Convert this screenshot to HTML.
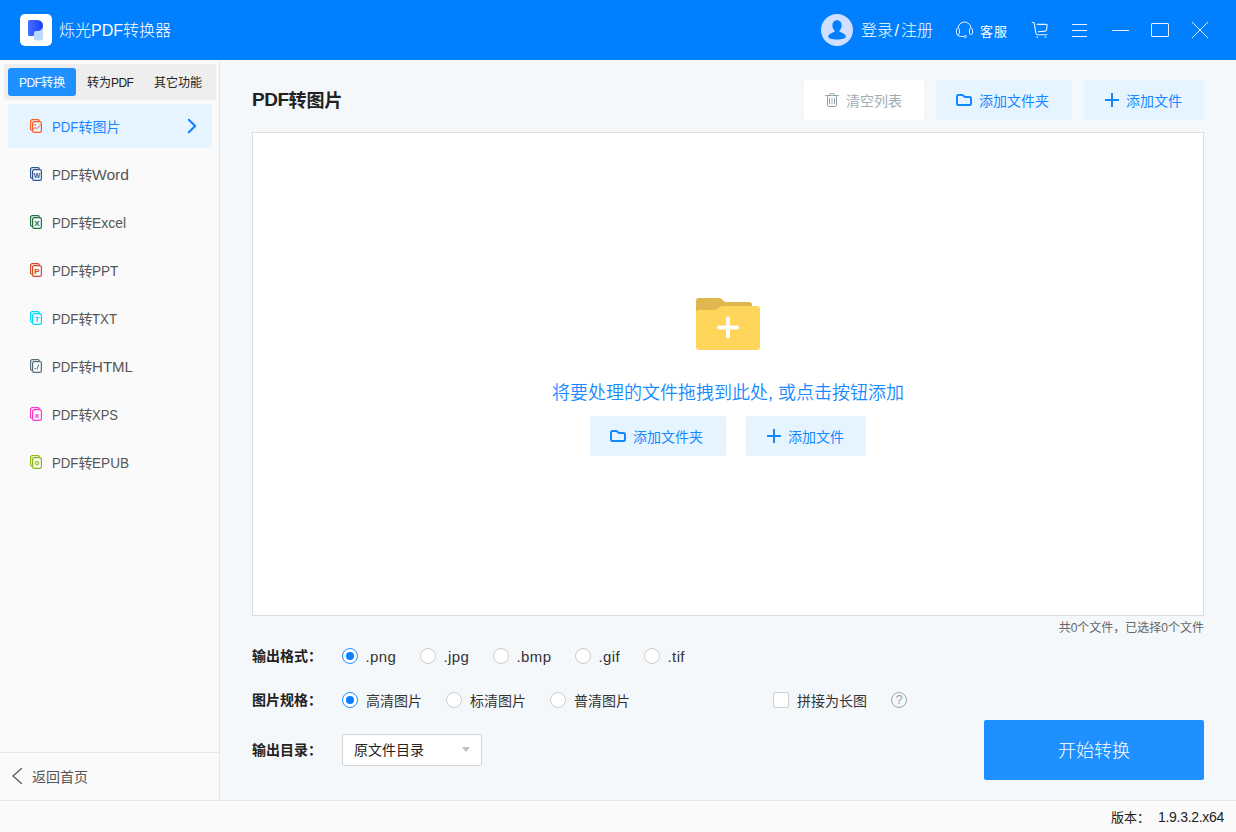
<!DOCTYPE html>
<html lang="zh-CN">
<head>
<meta charset="utf-8">
<title>烁光PDF转换器</title>
<style>
*{box-sizing:border-box;margin:0;padding:0}
html,body{width:1236px;height:832px;overflow:hidden}
body{position:relative;background:#f4f8fa;font-family:"Liberation Sans","Noto Sans CJK SC",sans-serif;color:#333;font-size:14px}
.abs{position:absolute}
.t{position:absolute;white-space:nowrap;line-height:1}
/* title bar */
#bar{left:0;top:0;width:1236px;height:60px;background:#0080ff}
#logo{left:20px;top:14px;width:32px;height:32px;background:#fff;border-radius:5px}
/* sidebar */
#side{left:0;top:60px;width:220px;height:740px;background:#fafafa;border-right:1px solid #e6e6e6}
#tabs{left:4px;top:64px;width:212px;height:36px;background:#eeeeee;border-radius:3px}
#tabA{left:8px;top:68px;width:68px;height:28px;background:#1e90ff;border-radius:3px}
#sel{left:8px;top:104px;width:204px;height:44px;background:#e6f4ff;border-radius:4px}
.mi{font-size:14px;color:#555;left:52px}
#sideline{left:0;top:752px;width:219px;height:1px;background:#e6e6e6}
/* footer */
#foot{left:0;top:800px;width:1236px;height:32px;background:#fafafa;border-top:1px solid #e6e6e6}
/* main */
#drop{left:252px;top:132px;width:952px;height:484px;background:#fff;border:1px solid #dcdcdc}
.btn{position:absolute;border-radius:3px;background:#e6f4ff}
.btxt{font-size:14px;color:#1488ff}
.lab{font-size:14px;font-weight:bold;color:#222;left:252px}
.radio{position:absolute;width:16px;height:16px;border-radius:50%;border:1px solid #ccc;background:#fff}
.radio.on{border-color:#1e90ff}
.radio.on::after{content:"";position:absolute;left:3px;top:3px;width:8px;height:8px;border-radius:50%;background:#0a80ff}
.rt{font-size:14px;color:#333}
.l{letter-spacing:-.6px}
.sx{display:inline-block;font-size:15px;white-space:nowrap}
.sx span{display:inline-block;transform-origin:0 50%}
</style>
</head>
<body>
<div id="bar" class="abs"></div>
<div id="logo" class="abs"></div>
<svg class="abs" style="left:20px;top:14px" width="32" height="32" viewBox="0 0 32 32"><defs><linearGradient id="lg" x1="0" y1="0" x2="1" y2="0"><stop offset="0" stop-color="#4272ff"/><stop offset="1" stop-color="#1a3cff"/></linearGradient></defs><rect x="14" y="10" width="9" height="16.500" rx="3" fill="#b9d9ff"/><path d="M9.5,6 H17.5 a5.5,5.5 0 0 1 0,11 H16 q-2,0 -2,2 V21 q0,1 -1,1 H9.5 q-1.5,0 -1.5,-1.5 V7.5 q0,-1.5 1.5,-1.5 z" fill="url(#lg)"/></svg>
<div class="t" style="left:59px;top:23px;font-size:16px;color:#fff;font-weight:300">烁光<span style="letter-spacing:0">PDF</span>转换器</div>
<div class="t" style="left:861px;top:23px;font-size:16px;font-weight:300;color:#fff">登录<span style="margin:0 2px 0 1.500px">/</span>注册</div>
<div class="t" style="left:980px;top:25px;font-size:13px;letter-spacing:1px;color:#fff">客服</div>

<svg class="abs" style="left:821px;top:14px" width="32" height="32" viewBox="0 0 32 32"><circle cx="16" cy="16" r="16" fill="#d0deff"/><path transform="translate(0,-.6) scale(1,1.045)" d="M16,6.5 c3,0 4.6,2.2 4.6,5 c0,2.2 -1,3.8 -2,4.8 c-.4,.5 -.2,1.200 .6,1.600 c3,1.200 5.600,2.200 5.600,4.200 c0,2 -4,2.900 -8.800,2.900 s-8.800,-.9 -8.800,-2.900 c0,-2 2.600,-3 5.600,-4.200 c.8,-.4 1,-1.100 .6,-1.600 c-1,-1 -2,-2.600 -2,-4.800 c0,-2.800 1.600,-5 4.600,-5 z" fill="#0080ff"/></svg>
<svg class="abs" style="left:955px;top:21px" width="19" height="18" viewBox="0 0 19 18"><g fill="none" stroke="#e6f0ff" stroke-width="1"><path d="M3,7.500 a6.500,6.500 0 0 1 13,0"/><rect x="1.500" y="7.500" width="3" height="6" rx="1.200"/><rect x="14.500" y="7.500" width="3" height="6" rx="1.200"/><path d="M2.200,13.300 q.6,2.200 3.300,2.200 H9.200"/><circle cx="10.300" cy="15.500" r="1.100"/></g></svg>
<svg class="abs" style="left:1031px;top:21px" width="19" height="18" viewBox="0 0 19 18"><g fill="none" stroke="#e6f0ff" stroke-width="1.100" stroke-linecap="round" stroke-linejoin="round"><path d="M1.200,1.500 H2.300 q.8,0 1,.8 L4.800,12 q.3,1.700 1.700,1.700 H16"/><path d="M6.200,3.400 H15.200 q1,0 .9,1 L15.500,9 q-.1,1 -1.100,1.100 L7.200,10.800"/></g><circle cx="6.200" cy="16.100" r=".9" fill="#cfe4ff"/><circle cx="14.500" cy="16.100" r=".9" fill="#cfe4ff"/></svg>
<div class="abs" style="left:1072px;top:24px;width:15px;height:1px;background:#e6f0ff"></div>
<div class="abs" style="left:1072px;top:30px;width:15px;height:1px;background:#e6f0ff"></div>
<div class="abs" style="left:1072px;top:36px;width:15px;height:1px;background:#e6f0ff"></div>
<div class="abs" style="left:1112px;top:30px;width:17px;height:1px;background:#e6f0ff"></div>
<div class="abs" style="left:1151px;top:23px;width:18px;height:14px;border:1px solid #e6f0ff;border-radius:1px"></div>
<svg class="abs" style="left:1190px;top:20px" width="20" height="20" viewBox="0 0 20 20"><path d="M2,2 L18,18 M18,2 L2,18" stroke="#e6f0ff" stroke-width="1" fill="none"/></svg>

<div id="side" class="abs"></div>
<div id="tabs" class="abs"></div>
<div id="tabA" class="abs"></div>
<div class="t" style="left:19px;top:77px;font-size:12px;color:#fff"><span class="l">PDF</span>转换</div>
<div class="t" style="left:87px;top:77px;font-size:12px;color:#222">转为<span class="l">PDF</span></div>
<div class="t" style="left:154px;top:77px;font-size:12px;color:#222">其它功能</div>
<div id="sel" class="abs"></div>
<div class="t mi" style="top:119px;color:#1a84ff"><span class="sx" style="width:26.4px"><span style="transform:scaleX(0.880)">PDF</span></span>转图片</div>
<div class="t mi" style="top:167px"><span class="sx" style="width:26.4px"><span style="transform:scaleX(0.880)">PDF</span></span>转<span class="sx" style="width:37px"><span style="transform:scaleX(1.040)">Word</span></span></div>
<div class="t mi" style="top:215px"><span class="sx" style="width:26.4px"><span style="transform:scaleX(0.880)">PDF</span></span>转<span class="sx" style="width:34px"><span style="transform:scaleX(0.927)">Excel</span></span></div>
<div class="t mi" style="top:263px"><span class="sx" style="width:26.4px"><span style="transform:scaleX(0.880)">PDF</span></span>转<span class="sx" style="width:26.4px"><span style="transform:scaleX(0.904)">PPT</span></span></div>
<div class="t mi" style="top:311px"><span class="sx" style="width:26.4px"><span style="transform:scaleX(0.880)">PDF</span></span>转<span class="sx" style="width:25px"><span style="transform:scaleX(0.882)">TXT</span></span></div>
<div class="t mi" style="top:359px"><span class="sx" style="width:26.4px"><span style="transform:scaleX(0.880)">PDF</span></span>转<span class="sx" style="width:41px"><span style="transform:scaleX(1.004)">HTML</span></span></div>
<div class="t mi" style="top:407px"><span class="sx" style="width:26.4px"><span style="transform:scaleX(0.880)">PDF</span></span>转<span class="sx" style="width:26px"><span style="transform:scaleX(0.866)">XPS</span></span></div>
<div class="t mi" style="top:455px"><span class="sx" style="width:26.4px"><span style="transform:scaleX(0.880)">PDF</span></span>转<span class="sx" style="width:37px"><span style="transform:scaleX(0.906)">EPUB</span></span></div>
<svg class="abs" style="left:30px;top:119px" width="12" height="14" viewBox="0 0 12 14"><rect x=".6" y=".6" width="8.800" height="10.800" rx="1.700" stroke-width="1.200" fill="none" stroke="#ff5722"/><rect x="2.600" y="2.600" width="8.800" height="10.800" rx="1.700" stroke-width="1.200" fill="#e6f4ff" stroke="#ff5722"/><rect x="4.6" y="5" width="1.4" height="1.4" fill="#ff5722"/><path d="M2.8,10.6 L5,8.4 L6.6,9.8 L11,5.6" fill="none" stroke="#ff5722"/></svg>
<svg class="abs" style="left:30px;top:167px" width="12" height="14" viewBox="0 0 12 14"><rect x=".6" y=".6" width="8.800" height="10.800" rx="1.700" stroke-width="1.200" fill="none" stroke="#2b579a"/><rect x="2.600" y="2.600" width="8.800" height="10.800" rx="1.700" stroke-width="1.200" fill="#fafafa" stroke="#2b579a"/><text x="7" y="10.900" font-family="Liberation Sans,sans-serif" font-weight="bold" font-size="7.500" text-anchor="middle" textLength="6.400" lengthAdjust="spacingAndGlyphs" fill="#2b579a">W</text></svg>
<svg class="abs" style="left:30px;top:215px" width="12" height="14" viewBox="0 0 12 14"><rect x=".6" y=".6" width="8.800" height="10.800" rx="1.700" stroke-width="1.200" fill="none" stroke="#217346"/><rect x="2.600" y="2.600" width="8.800" height="10.800" rx="1.700" stroke-width="1.200" fill="#fafafa" stroke="#217346"/><text x="7" y="11" font-family="Liberation Sans,sans-serif" font-weight="bold" font-size="8" text-anchor="middle" fill="#217346">X</text></svg>
<svg class="abs" style="left:30px;top:263px" width="12" height="14" viewBox="0 0 12 14"><rect x=".6" y=".6" width="8.800" height="10.800" rx="1.700" stroke-width="1.200" fill="none" stroke="#d24726"/><rect x="2.600" y="2.600" width="8.800" height="10.800" rx="1.700" stroke-width="1.200" fill="#fafafa" stroke="#d24726"/><text x="7" y="11" font-family="Liberation Sans,sans-serif" font-weight="bold" font-size="8" text-anchor="middle" fill="#d24726">P</text></svg>
<svg class="abs" style="left:30px;top:311px" width="12" height="14" viewBox="0 0 12 14"><rect x=".6" y=".6" width="8.800" height="10.800" rx="1.700" stroke-width="1.200" fill="none" stroke="#00d8ff"/><rect x="2.600" y="2.600" width="8.800" height="10.800" rx="1.700" stroke-width="1.200" fill="#fafafa" stroke="#00d8ff"/><text x="7" y="11" font-family="Liberation Sans,sans-serif" font-weight="bold" font-size="8" text-anchor="middle" fill="#00d8ff">T</text></svg>
<svg class="abs" style="left:30px;top:359px" width="12" height="14" viewBox="0 0 12 14"><rect x=".6" y=".6" width="8.800" height="10.800" rx="1.700" stroke-width="1.200" fill="none" stroke="#546e7a"/><rect x="2.600" y="2.600" width="8.800" height="10.800" rx="1.700" stroke-width="1.200" fill="#fafafa" stroke="#546e7a"/><rect x="4.6" y="9" width="1.2" height="1.2" fill="#546e7a"/><path d="M7,10.5 L8.6,5.5" stroke="#546e7a" fill="none"/></svg>
<svg class="abs" style="left:30px;top:407px" width="12" height="14" viewBox="0 0 12 14"><rect x=".6" y=".6" width="8.800" height="10.800" rx="1.700" stroke-width="1.200" fill="none" stroke="#ff33cc"/><rect x="2.600" y="2.600" width="8.800" height="10.800" rx="1.700" stroke-width="1.200" fill="#fafafa" stroke="#ff33cc"/><text x="7" y="10.600" font-family="Liberation Sans,sans-serif" font-weight="bold" font-size="8" text-anchor="middle" fill="#ff33cc">x</text></svg>
<svg class="abs" style="left:30px;top:455px" width="12" height="14" viewBox="0 0 12 14"><rect x=".6" y=".6" width="8.800" height="10.800" rx="1.700" stroke-width="1.200" fill="none" stroke="#8cb811"/><rect x="2.600" y="2.600" width="8.800" height="10.800" rx="1.700" stroke-width="1.200" fill="#fafafa" stroke="#8cb811"/><circle cx="7" cy="8.2" r="1.8" fill="none" stroke="#8cb811"/><rect x="6.5" y="7.7" width="1" height="1" fill="#8cb811"/></svg>
<svg class="abs" style="left:186px;top:117px" width="12" height="18" viewBox="0 0 12 18"><path d="M2.8,2.8 L9.2,9 L2.8,15.2" fill="none" stroke="#0a80ff" stroke-width="2" stroke-linecap="round" stroke-linejoin="round"/></svg>
<svg class="abs" style="left:11px;top:767px" width="12" height="18" viewBox="0 0 12 18"><path d="M10.5,1.5 L2,9 L10.5,16.5" fill="none" stroke="#555" stroke-width="1.2" stroke-linecap="round" stroke-linejoin="round"/></svg>
<div id="sideline" class="abs"></div>
<div class="t" style="left:32px;top:770px;font-size:14px;color:#555">返回首页</div>

<div class="t" style="left:252px;top:91px;font-size:18px;font-weight:bold;color:#222"><span style="font-size:19px;letter-spacing:-.5px;position:relative;top:-1px">PDF</span>转图片</div>
<div class="btn" style="left:804px;top:80px;width:120px;height:40px;background:#fff"></div>
<div class="t" style="left:846px;top:94px;font-size:14px;color:#9fadb7">清空列表</div>
<div class="btn" style="left:936px;top:80px;width:136px;height:40px"></div>
<div class="t btxt" style="left:979px;top:94px">添加文件夹</div>
<div class="btn" style="left:1084px;top:80px;width:120px;height:40px"></div>
<div class="t btxt" style="left:1126px;top:94px">添加文件</div>

<div id="drop" class="abs"></div>
<div class="t" style="left:552px;top:384px;font-size:18px;font-weight:350;color:#168aff">将要处理的文件拖拽到此处, 或点击按钮添加</div>
<div class="btn" style="left:590px;top:416px;width:136px;height:40px"></div>
<div class="t btxt" style="left:633px;top:430px">添加文件夹</div>
<div class="btn" style="left:746px;top:416px;width:120px;height:40px"></div>
<div class="t btxt" style="left:788px;top:430px">添加文件</div>

<svg class="abs" style="left:825px;top:93px" width="14" height="14" viewBox="0 0 14 14"><g fill="none" stroke="#8fa3b0" stroke-width="1" stroke-linecap="round"><path d="M.5,2.500 H13.500"/><path d="M4.500,2.500 V1.500 q0,-1 1,-1 H8.500 q1,0 1,1 V2.500"/><path d="M2.500,2.500 V12 q0,1.500 1.500,1.500 H10 q1.500,0 1.500,-1.500 V2.500"/><path d="M4.500,5.500 V10.500 M9.500,5.500 V10.500"/><path d="M7,5.500 V10.500" stroke-opacity=".6" stroke-width="1.500"/></g></svg><svg class="abs" style="left:956px;top:94px" width="16" height="12" viewBox="0 0 16 12"><path d="M1,2.500 q0,-1.500 1.500,-1.500 H6 q.7,0 1.200,.5 L8.300,2.500 q.5,.5 1.200,.5 H13.500 q1.500,0 1.500,1.500 V9.500 q0,1.500 -1.500,1.500 H2.500 q-1.500,0 -1.500,-1.500 z" fill="none" stroke="#1088ff" stroke-width="2" stroke-linejoin="round"/></svg><div class="abs" style="left:1105px;top:99px;width:14px;height:2px;background:#1088ff"></div><div class="abs" style="left:1111px;top:93px;width:2px;height:14px;background:#1088ff"></div><svg class="abs" style="left:610px;top:430px" width="16" height="12" viewBox="0 0 16 12"><path d="M1,2.500 q0,-1.500 1.500,-1.500 H6 q.7,0 1.200,.5 L8.300,2.500 q.5,.5 1.200,.5 H13.500 q1.500,0 1.500,1.500 V9.500 q0,1.500 -1.500,1.500 H2.500 q-1.500,0 -1.500,-1.500 z" fill="none" stroke="#1088ff" stroke-width="2" stroke-linejoin="round"/></svg><div class="abs" style="left:767px;top:435px;width:14px;height:2px;background:#1088ff"></div><div class="abs" style="left:773px;top:429px;width:2px;height:14px;background:#1088ff"></div><svg class="abs" style="left:696px;top:298px" width="64" height="52" viewBox="0 0 64 52"><path d="M0,3 q0,-3 3,-3 H23 q1.500,0 2.500,1 L29,4 H53 q3,0 3,3 V20 H0 z" fill="#deb84e"/><path d="M0,15 q0,-3 3,-3 H17.500 q1.500,0 2.500,-.8 L24.500,8.800 q1,-.8 2.500,-.8 H61 q3,0 3,3 V49 q0,3 -3,3 H3 q-3,0 -3,-3 z" fill="#ffd55a"/><path d="M23,29.500 H41 M32,20.500 V38.500" stroke="#fff" stroke-width="4" stroke-linecap="round"/></svg>
<div class="t" style="right:32px;top:622px;font-size:12px;color:#666">共0个文件，已选择0个文件</div>

<div class="t lab" style="top:649px">输出格式：</div>
<div class="t lab" style="top:693px">图片规格：</div>
<div class="t lab" style="top:743px">输出目录：</div>


<div class="radio on" style="left:342px;top:648px"></div><div class="t rt" style="left:365.5px;top:649px;font-size:15px;letter-spacing:.4px">.png</div>
<div class="radio" style="left:420px;top:648px"></div><div class="t rt" style="left:443.5px;top:649px;font-size:15px;letter-spacing:.4px">.jpg</div>
<div class="radio" style="left:493px;top:648px"></div><div class="t rt" style="left:516.5px;top:649px;font-size:15px;letter-spacing:.4px">.bmp</div>
<div class="radio" style="left:575px;top:648px"></div><div class="t rt" style="left:598.5px;top:649px;font-size:15px;letter-spacing:.4px">.gif</div>
<div class="radio" style="left:644px;top:648px"></div><div class="t rt" style="left:667.5px;top:649px;font-size:15px;letter-spacing:.4px">.tif</div>

<div class="radio on" style="left:342px;top:692px"></div><div class="t rt" style="left:366px;top:694px">高清图片</div>
<div class="radio" style="left:446px;top:692px"></div><div class="t rt" style="left:470px;top:694px">标清图片</div>
<div class="radio" style="left:550px;top:692px"></div><div class="t rt" style="left:574px;top:694px">普清图片</div>

<div class="abs" style="left:773px;top:692px;width:16px;height:16px;background:#fff;border:1px solid #d0d0d0;border-radius:2px"></div>
<div class="t rt" style="left:797px;top:694px">拼接为长图</div>
<div class="abs" style="left:891px;top:692px;width:16px;height:16px;border:1px solid #9aa6ad;border-radius:50%"></div>
<div class="t" style="left:895.4px;top:693px;font-size:13px;color:#93a1aa">?</div>

<div class="abs" style="left:342px;top:734px;width:140px;height:32px;background:#fff;border:1px solid #d4d4d4;border-radius:2px"></div>
<div class="t rt" style="left:354px;top:743px;color:#222">原文件目录</div>
<div class="abs" style="left:462px;top:747px;width:0;height:0;border-left:4px solid transparent;border-right:4px solid transparent;border-top:5px solid #c0c0c0"></div>

<div class="abs" style="left:984px;top:720px;width:220px;height:60px;background:#1e90ff;border-radius:2px"></div>
<div class="t" style="left:1058px;top:742px;font-size:18px;font-weight:300;color:#fff">开始转换</div>

<div id="foot" class="abs"></div>
<div class="t" style="left:1111px;top:811px;font-size:13px;color:#222">版本：<span style="position:absolute;left:47px;top:-1px;font-size:14px;letter-spacing:-.3px">1.9.3.2.x64</span></div>
</body>
</html>
